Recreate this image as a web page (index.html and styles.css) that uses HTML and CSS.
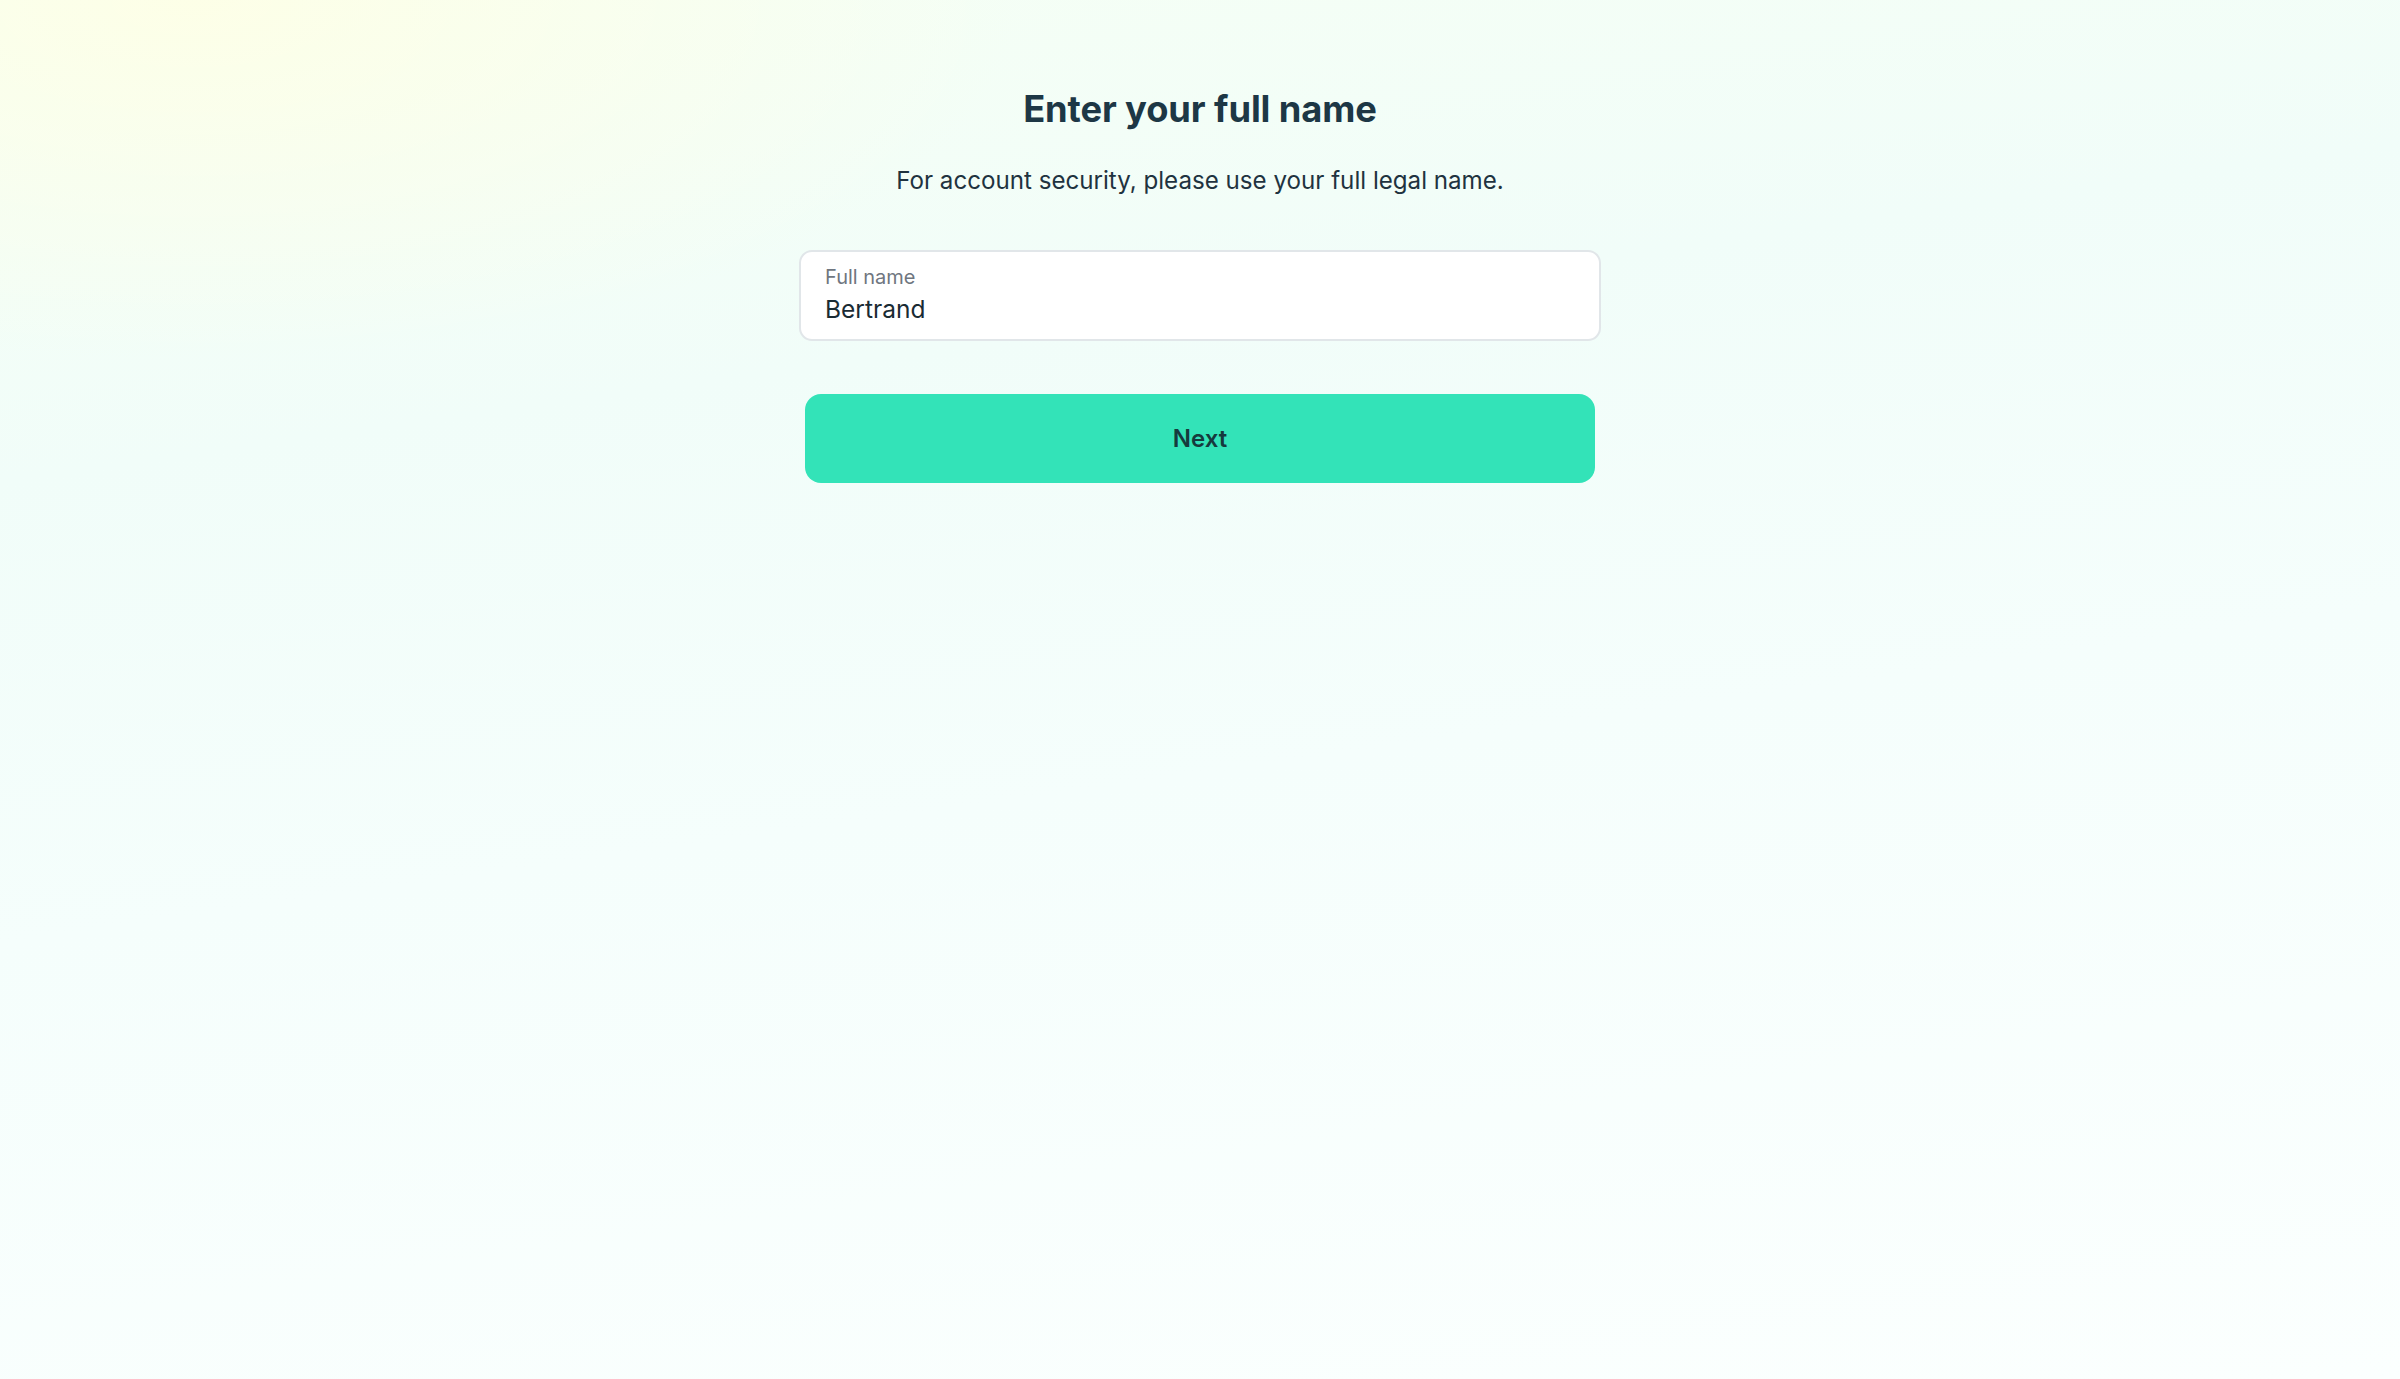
FILE: index.html
```html
<!DOCTYPE html>
<html lang="en">
<head>
<meta charset="utf-8">
<title>Enter your full name</title>
<link rel="stylesheet" href="styles.css">
</head>
<body>
<main class="page">
  <section class="form">
    <h1 class="title">Enter your full name</h1>
    <p class="subtitle">For account security, please use your full legal name.</p>
    <label class="field">
      <span class="field-label">Full name</span>
      <span class="field-value">Bertrand</span>
    </label>
    <button class="next" type="button">Next</button>
  </section>
</main>
</body>
</html>
```
FILE: styles.css
```css
* { box-sizing: border-box; }
html, body { margin: 0; padding: 0; }
body {
  min-height: 100vh;
  font-family: Inter, "Noto Sans", "Liberation Sans", sans-serif;
  background:
    radial-gradient(ellipse 1100px 480px at 8% 0%, rgba(255, 255, 228, 0.8), rgba(255, 255, 228, 0) 75%),
    linear-gradient(172deg, #f6fff4 0%, #f1fdf9 28%, #f5fefc 55%, #fbfffe 100%);
}
.page {
  display: flex;
  justify-content: center;
  padding-top: 87px;
}
.form {
  width: 802px;
  display: flex;
  flex-direction: column;
  align-items: center;
}
.title {
  margin: 0;
  font-size: 36.3px;
  line-height: 44px;
  font-weight: 700;
  color: #1d3745;
  letter-spacing: -0.1px;
}
.subtitle {
  margin: 32px 0 0;
  font-size: 24.15px;
  line-height: 36px;
  color: #1f3340;
}
.field {
  margin-top: 51px;
  width: 802px;
  height: 91px;
  background: #ffffff;
  border: 2px solid #e1e6e9;
  border-radius: 13px;
  padding: 13px 24px 0;
  display: flex;
  flex-direction: column;
  gap: 5px;
}
.field-label {
  font-size: 20px;
  line-height: 24px;
  color: #6f7680;
}
.field-value {
  font-size: 24.5px;
  line-height: 30px;
  color: #1a2b33;
}
.next {
  margin-top: 53px;
  width: 790px;
  height: 89px;
  border: none;
  border-radius: 16px;
  background: #33e3b8;
  font-family: inherit;
  font-size: 24px;
  font-weight: 600;
  color: #163a3d;
  cursor: pointer;
}
```
